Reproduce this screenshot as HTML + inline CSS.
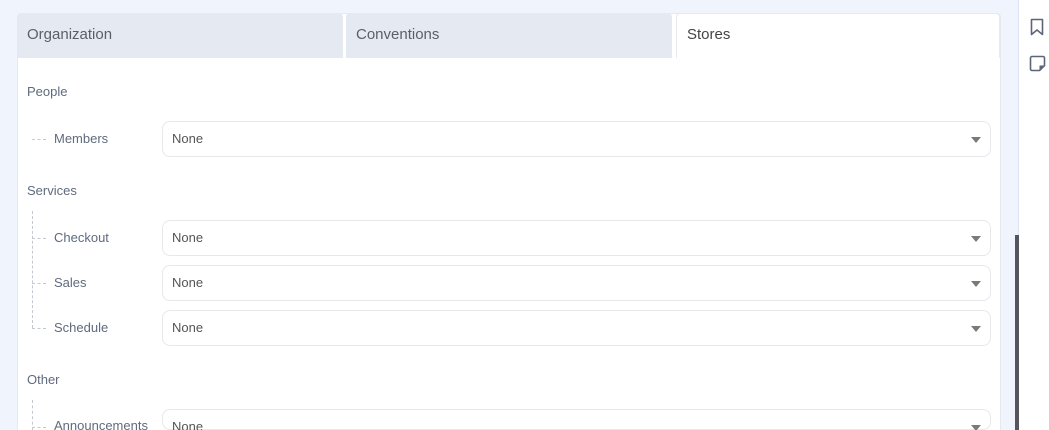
<!DOCTYPE html>
<html style="overflow:hidden;height:430px"><head><style>
*{box-sizing:border-box;margin:0;padding:0}
body{width:1049px;height:430px;overflow:hidden;background:#eff4fd;font-family:"Liberation Sans",sans-serif;position:relative}
.panel{position:absolute;left:17px;top:13px;width:984px;height:417px;background:#fff;border:1px solid #e6eaf0;border-bottom:none;border-radius:4px 4px 0 0}
.tab{position:absolute;top:13px;height:45px;background:#e5e9f2;color:#5a5f68;font-size:15px;line-height:44px;padding-left:10px;border-radius:4px 4px 0 0}
.side{position:absolute;left:1018px;top:0;width:31px;height:430px;background:#fff;border-left:1px solid #dde5f3}
.sb{position:absolute;left:1015px;top:235px;width:4px;height:195px;background:#55565c}
.sec{position:absolute;left:27px;font-size:13px;color:#5f6b7e}
.lbl{position:absolute;left:54px;font-size:13px;color:#5f6b7e}
.inp{position:absolute;left:162px;width:829px;height:36px;border:1px solid #e6e8ec;border-radius:8px;font-size:13px;color:#555;line-height:34px;padding-left:9px;background:#fff}
.inp:after{content:"";position:absolute;right:9px;top:15px;border-left:5px solid transparent;border-right:5px solid transparent;border-top:6px solid #7a7a7a}
.h{position:absolute;left:32px;width:14px;border-top:1px dashed #c4c8cf}
.v{position:absolute;left:32px;border-left:1px dashed #c4c8cf;width:0}
</style></head><body>
<div class="panel"></div>
<div class="tab" style="left:17px;width:326px">Organization</div>
<div class="tab" style="left:346px;width:326px">Conventions</div>
<div class="tab" style="left:676px;width:324px;background:#fff;color:#444;line-height:42px;border:1px solid #e6eaf0;border-bottom:none">Stores</div>
<div class="side">
<svg style="position:absolute;left:11px;top:18px" width="14" height="18" viewBox="0 0 14 18"><path d="M1.5 1.5h11v15l-5.5-4.5-5.5 4.5z" fill="none" stroke="#5d6678" stroke-width="1.6" stroke-linejoin="round"/></svg>
<svg style="position:absolute;left:10px;top:55px" width="17" height="17" viewBox="0 0 17 17"><path d="M3 1.5h11a1.5 1.5 0 0 1 1.5 1.5v7.5l-5 5H3A1.5 1.5 0 0 1 1.5 14V3A1.5 1.5 0 0 1 3 1.5z" fill="none" stroke="#5d6678" stroke-width="1.6" stroke-linejoin="round"/><path d="M15.5 10.5h-5v5z" fill="#5d6678"/></svg>
</div>
<div class="sb"></div>

<div class="sec" style="top:84px">People</div>
<div class="h" style="top:139px"></div>
<div class="lbl" style="top:131px">Members</div>
<div class="inp" style="top:121px">None</div>

<div class="sec" style="top:183px">Services</div>
<div class="v" style="top:211px;height:117px"></div>
<div class="h" style="top:238px"></div><div class="lbl" style="top:230px">Checkout</div><div class="inp" style="top:220px">None</div>
<div class="h" style="top:283px"></div><div class="lbl" style="top:275px">Sales</div><div class="inp" style="top:265px">None</div>
<div class="h" style="top:328px"></div><div class="lbl" style="top:320px">Schedule</div><div class="inp" style="top:310px">None</div>

<div class="sec" style="top:372px">Other</div>
<div class="v" style="top:400px;height:30px"></div>
<div class="h" style="top:427px"></div><div class="lbl" style="top:418px">Announcements</div><div class="inp" style="top:409px;height:21px">None</div>
</body></html>
